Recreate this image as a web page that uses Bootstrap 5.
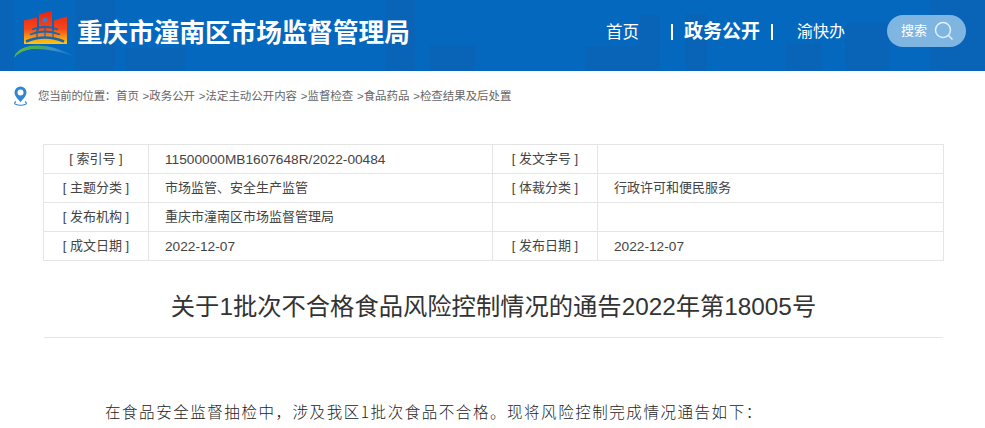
<!DOCTYPE html>
<html lang="zh-CN">
<head>
<meta charset="utf-8">
<title>通告</title>
<link href="https://cdn.jsdelivr.net/npm/bootstrap@5.3.0/dist/css/bootstrap.min.css" rel="stylesheet">
<style>
html,body{height:428px;overflow:hidden}
body{font-family:"Liberation Sans","Noto Sans CJK SC",sans-serif;background:#fff;color:#333}
.site-head{height:71px;background:#0568bf;position:relative;overflow:hidden}
.sky{position:absolute;left:0;top:0;width:100%;height:71px}
.head-in{position:relative;height:71px;padding-left:13px;padding-right:19px}
.site-name{font-size:25.6px;font-weight:700;color:#fff;line-height:1;white-space:nowrap;margin:-4px 0 0 -1px}
.top-nav{font-size:16.5px;color:#fff;margin-top:-7px;margin-right:42px}
.nav-a{width:65px;white-space:nowrap}
.nav-bar{width:2px;height:16px;background:#fff}
.nav-b{font-weight:700;font-size:19px;white-space:nowrap;margin:0 11px}
.nav-c{white-space:nowrap;margin-left:24px;font-size:16px}
.srch{width:79px;height:32px;border-radius:16px;background:#7fb5e1;font-size:13px;color:#fff;margin-top:-9px;padding-left:14px}
.srch-ico{margin-left:3px}
.crumb-bar{height:50px;padding:2px 0 0 13px;font-size:11.45px;color:#666}
.crumb-bar svg{margin-top:-2px}
.crumb-bar span.t{margin-left:10px;white-space:nowrap;word-spacing:.6px}
.crumb-lead{letter-spacing:-.3px}
.meta-wrap{margin:23px 41px 0 43px}
.meta-tb{table-layout:fixed;width:901px;margin:0;font-size:13px;color:#444;--bs-table-color:#444;--bs-table-border-color:#e5e5e5}
.meta-tb td{height:29px;padding:0 0 2px;vertical-align:middle;border:1px solid #e5e5e5;line-height:1}
.meta-tb td.k{text-align:center}
.meta-tb td.v{padding-left:16px}
.meta-tb td.numc{padding-top:1px;padding-bottom:0}
.meta-num{font-size:13.7px}
.doc-title{font-size:24.3px;font-weight:400;color:#333;text-align:center;margin:0 42px 0 44px;height:77px;line-height:92px;border-bottom:1px solid #e5e5e5;white-space:nowrap}
.doc-body{margin:63px 0 0 105px;font-size:15.5px;line-height:20px;letter-spacing:1.55px;color:#222;white-space:nowrap;font-family:"Noto Sans CJK SC","Liberation Serif",serif;font-weight:300}
</style>
</head>
<body>
<header class="site-head">
<svg class="sky" viewBox="0 0 985 71" preserveAspectRatio="none" aria-hidden="true">
<g fill="#0a62b4" opacity=".8">
<rect x="0" y="0" width="14" height="71"/><rect x="75" y="0" width="40" height="71"/><rect x="125" y="48" width="60" height="23"/>
<rect x="385" y="0" width="30" height="71"/><rect x="430" y="45" width="45" height="26"/><rect x="585" y="46" width="75" height="25"/>
<rect x="640" y="15" width="20" height="56"/><rect x="685" y="14" width="22" height="57"/><rect x="786" y="44" width="36" height="27"/>
<rect x="845" y="23" width="45" height="48"/><rect x="930" y="0" width="55" height="71"/>
</g>
</svg>
<div class="head-in d-flex align-items-center">
<svg width="65" height="62" viewBox="13 4.5 65 62" aria-hidden="true" class="flex-shrink-0">
<defs>
<linearGradient id="lg" gradientUnits="userSpaceOnUse" x1="0" y1="10" x2="0" y2="44"><stop offset="0" stop-color="#ee1f10"/><stop offset=".55" stop-color="#f5491a"/><stop offset=".8" stop-color="#fb9a12"/><stop offset="1" stop-color="#ffcb0a"/></linearGradient>
<linearGradient id="sw" gradientUnits="userSpaceOnUse" x1="14" y1="0" x2="75" y2="0"><stop offset="0" stop-color="#63b53a"/><stop offset=".4" stop-color="#46a85c"/><stop offset=".65" stop-color="#3f8fcf"/><stop offset="1" stop-color="#2a7cc6" stop-opacity=".3"/></linearGradient>
</defs>
<path fill="url(#lg)" d="M24 20L37 17V30H39V14L52 10V30H54V20L67 16V43.500H24Z"/>
<circle cx="45" cy="19.500" r="2.500" fill="#3f7ec2"/>
<g fill="none" stroke="#1a66ad">
<path stroke-width="1.800" d="M32 29Q45 23.500 58 29"/>
<path stroke-width="1.800" d="M30 34Q45 28 60 34"/>
<path stroke-width="2.600" d="M26 41Q45 33 64 41"/>
<path stroke-width="1.200" d="M37 28V38M45 26V37M53 28V38"/>
</g>
<path fill="url(#sw)" d="M14 57.500Q16 48 30 45.500Q52 42.500 74 56Q52 47.500 32 48.500Q20 50 14 57.500Z"/>
</svg>
<div class="site-name">重庆市潼南区市场监督管理局</div>
<nav class="top-nav d-flex align-items-center ms-auto">
<div class="nav-a">首页</div>
<span class="nav-bar"></span>
<div class="nav-b">政务公开</div>
<span class="nav-bar"></span>
<div class="nav-c">渝快办</div>
</nav>
<div class="srch d-flex align-items-center gap-1 flex-shrink-0">
<span>搜索</span>
<svg class="srch-ico" width="20" height="20" viewBox="0 0 20 20" aria-hidden="true" fill="none" stroke="#e4f0fa" stroke-width="1.500"><circle cx="9" cy="9" r="7.500"/><path d="M14.500 14.500L18.500 18.500"/></svg>
</div>
</div>
</header>
<div class="crumb-bar d-flex align-items-center">
<svg width="15" height="20" viewBox="0 0 15 20" aria-hidden="true" class="flex-shrink-0"><path fill-rule="evenodd" fill="#2f86d2" d="M7.500 0.500a6 6 0 0 1 6 6c0 3.300-3.500 6.700-6 9.500-2.500-2.800-6-6.200-6-9.500a6 6 0 0 1 6-6zm0 3a3 3 0 1 0 0 6 3 3 0 0 0 0-6z"/><path d="M3 15.500Q1 17 2 18Q7.500 20.500 13 18Q14 17 12 15.500" fill="none" stroke="#2f86d2" stroke-width="1.200"/></svg>
<span class="t"><span class="crumb-lead">您当前的位置：</span>首页 &gt;政务公开 &gt;法定主动公开内容 &gt;监督检查 &gt;食品药品 &gt;检查结果及后处置</span>
</div>
<div class="meta-wrap">
<table class="table table-bordered meta-tb">
<colgroup><col style="width:105px"><col style="width:344px"><col style="width:105px"><col></colgroup>
<tbody>
<tr><td class="k">[ 索引号 ]</td><td class="v numc"><span class="meta-num">11500000MB1607648R/2022-00484</span></td><td class="k">[ 发文字号 ]</td><td class="v"></td></tr>
<tr><td class="k">[ 主题分类 ]</td><td class="v">市场监管、安全生产监管</td><td class="k">[ 体裁分类 ]</td><td class="v">行政许可和便民服务</td></tr>
<tr><td class="k">[ 发布机构 ]</td><td class="v">重庆市潼南区市场监督管理局</td><td class="k"></td><td class="v"></td></tr>
<tr><td class="k">[ 成文日期 ]</td><td class="v numc"><span class="meta-num">2022-12-07</span></td><td class="k">[ 发布日期 ]</td><td class="v numc"><span class="meta-num">2022-12-07</span></td></tr>
</tbody>
</table>
</div>
<h1 class="doc-title">关于1批次不合格食品风险控制情况的通告2022年第18005号</h1>
<p class="doc-body">在食品安全监督抽检中，涉及我区1批次食品不合格。现将风险控制完成情况通告如下：</p>
</body>
</html>
